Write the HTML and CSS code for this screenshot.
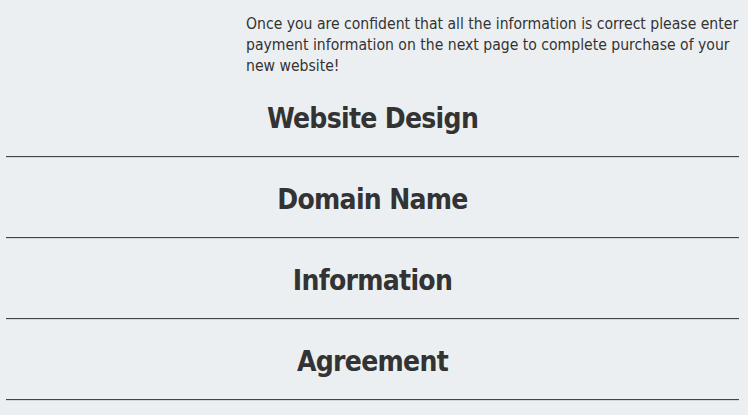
FILE: index.html
```html
<!DOCTYPE html>
<html>
<head>
	<title>review order</title>
	<link rel="stylesheet" href="styles.css">
</head>
<body>
<div class="page">
  <div class="intro">
    <p>Once you are confident that all the information is correct please enter payment information on the next page to complete purchase of your new website!</p>
  </div>
  <div class="step">
    <h2>Website Design</h2>
    <hr>
  </div>
  <div class="step">
    <h2>Domain Name</h2>
    <hr>
  </div>
  <div class="step">
    <h2>Information</h2>
    <hr>
  </div>
  <div class="step">
    <h2>Agreement</h2>
    <hr>
  </div>
</div>
</body>
</html>
```

FILE: styles.css
```css
html {
  box-sizing: border-box;
}
*,
*:before,
*:after {
  box-sizing: inherit;
}
body {
  margin: 0;
  background-color: #eceff2;
  color: #333;
  font-family: 'DejaVu Sans Condensed', 'DejaVu Sans', sans-serif;
}
.page {
  padding: 0 9px 0 6px;
}
.intro {
  padding: 14px 0 18px 240px;
}
.intro p {
  margin: 0;
  font-size: 15.6px;
  line-height: 21px;
}
.step h2 {
  margin: 0;
  padding: 7px 0 0;
  height: 61px;
  text-align: center;
  font-size: 28px;
  letter-spacing: -0.7px;
  line-height: 34px;
  font-weight: bold;
}
.step hr {
  margin: 0 0 18px;
  height: 2px;
  border: 0;
  border-top: 1px solid #444;
  border-bottom: 1px solid #d4d6d9;
}
```
